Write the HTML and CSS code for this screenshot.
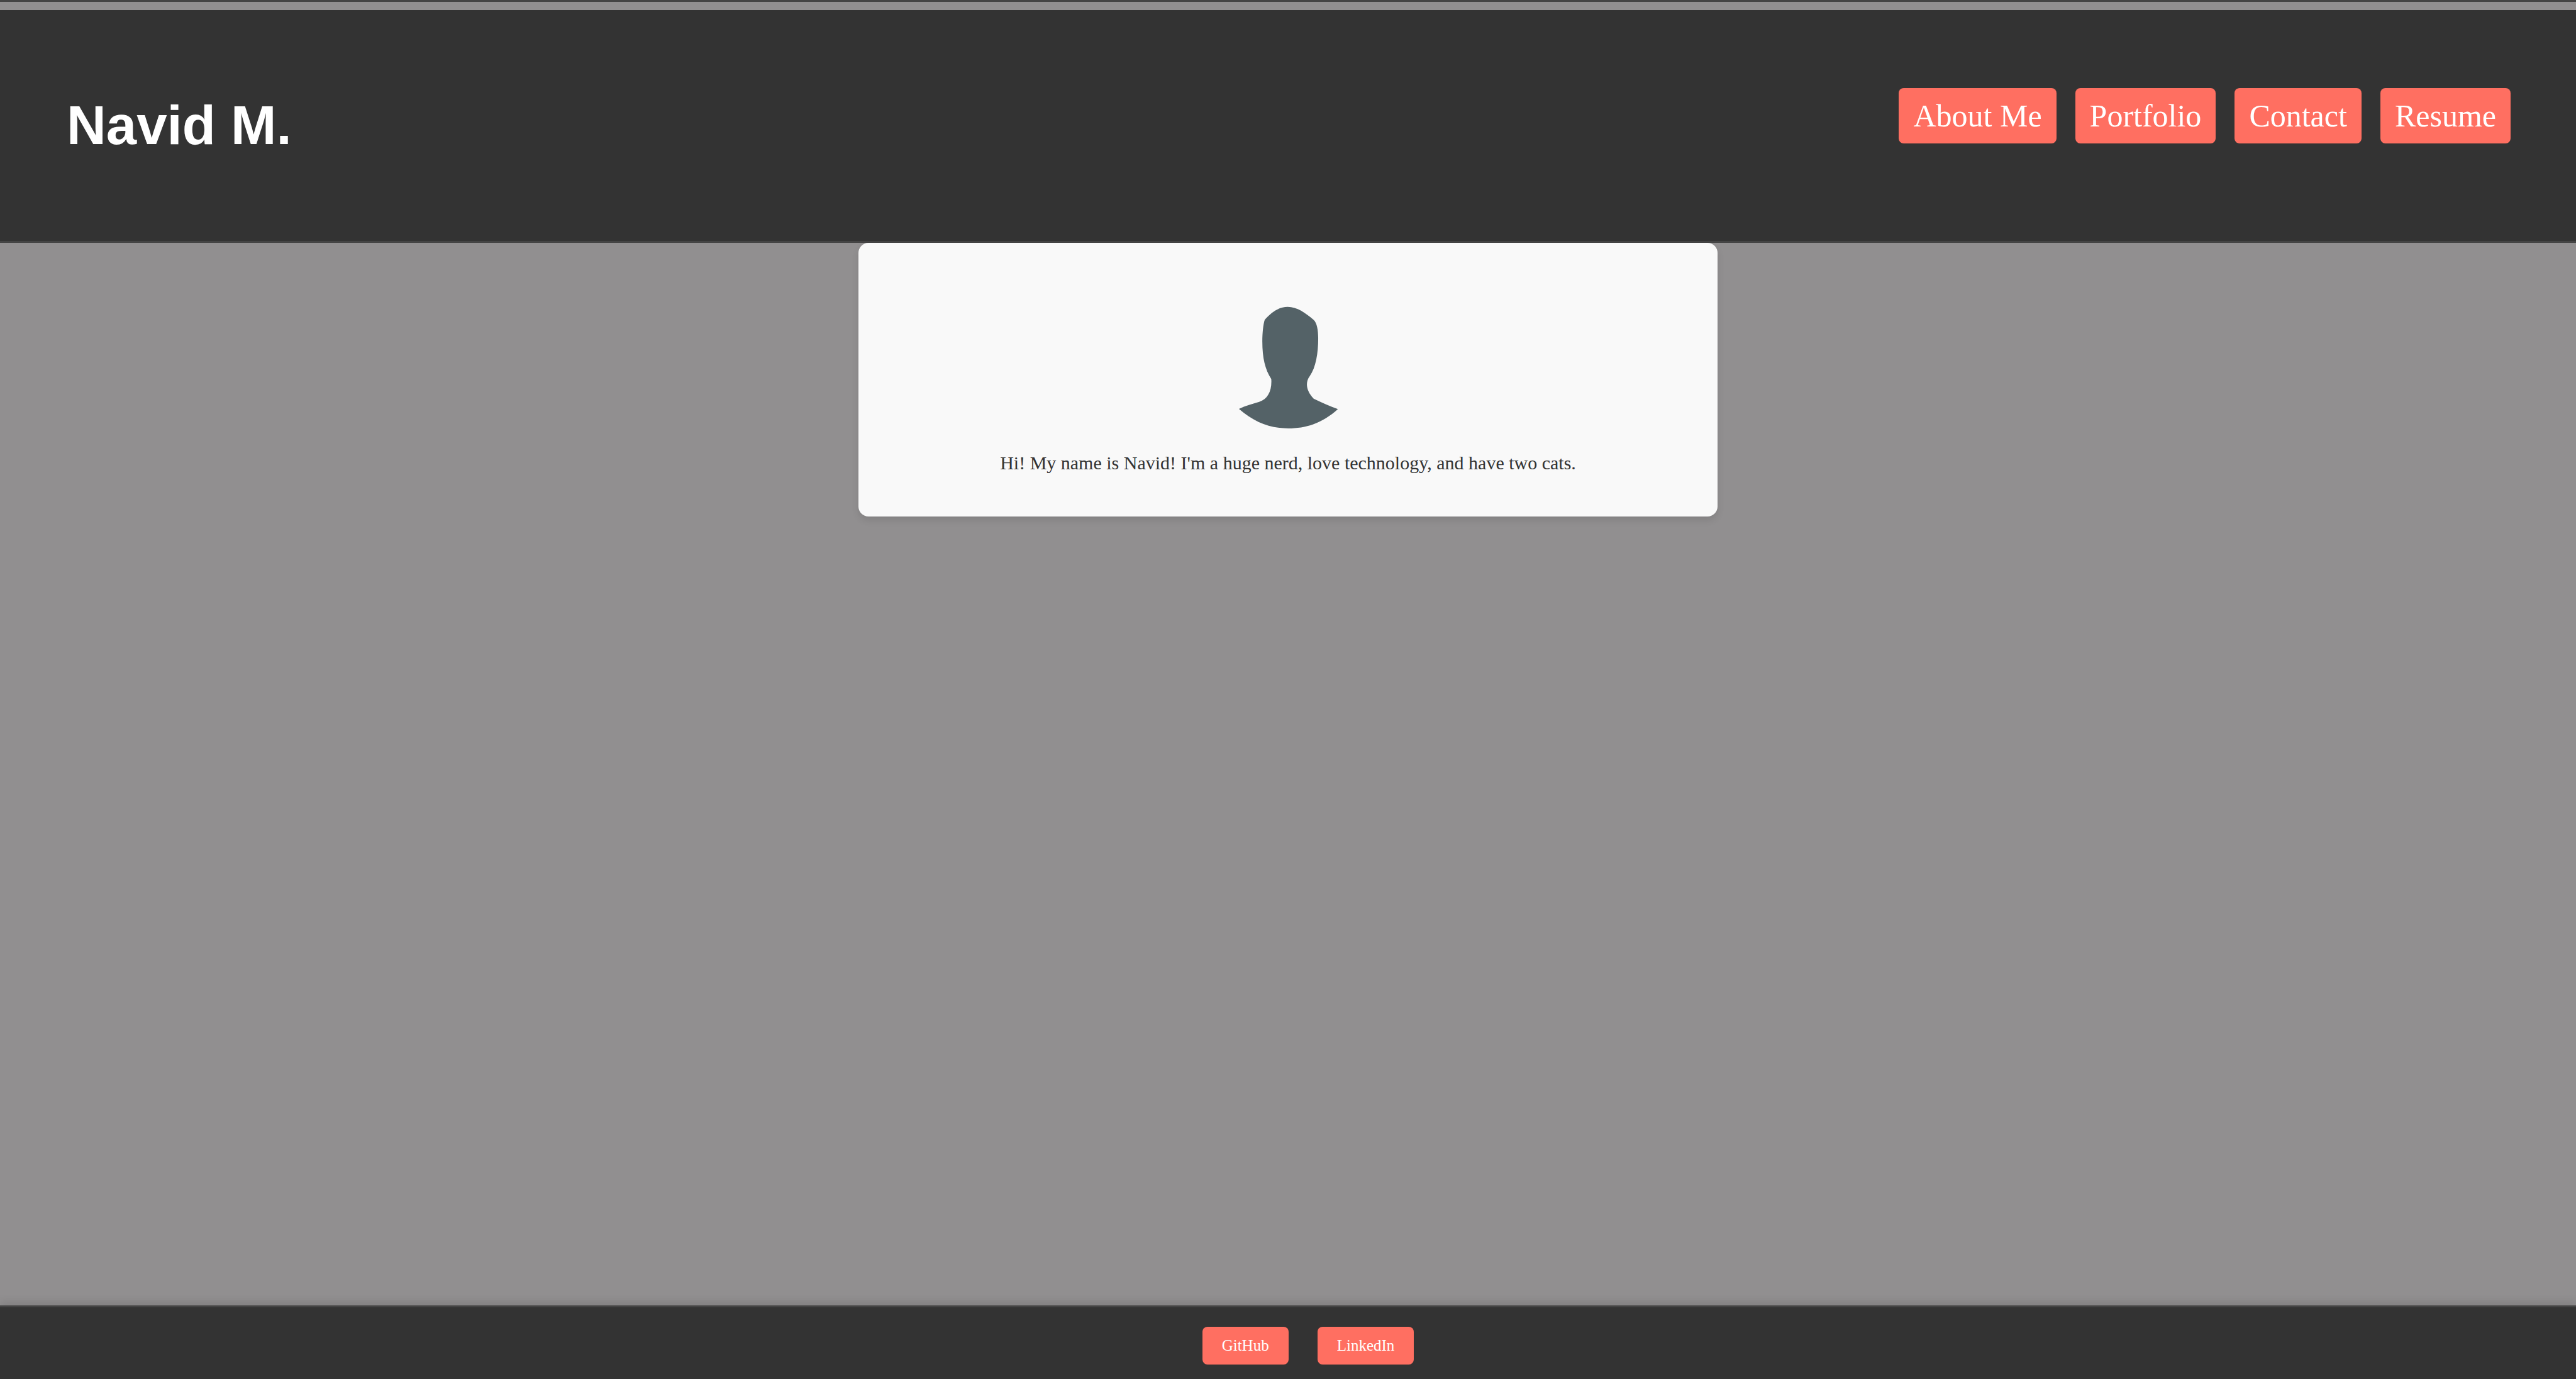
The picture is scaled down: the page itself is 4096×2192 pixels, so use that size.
FILE: index.html
```
<!DOCTYPE html>
<html lang="en">
<head>
<meta charset="utf-8">
<title>Navid M.</title>
<meta name="viewport" content="width=device-width, initial-scale=1">
<link rel="stylesheet" href="styles.css">
</head>
<body>
<header class="site-header">
  <h1 class="site-title">Navid M.</h1>
  <nav class="site-nav" aria-label="Main">
    <a class="nav-link" href="#about">About Me</a>
    <a class="nav-link" href="#portfolio">Portfolio</a>
    <a class="nav-link" href="#contact">Contact</a>
    <a class="nav-link" href="#resume">Resume</a>
  </nav>
</header>
<main class="content">
  <section class="card" id="about">
    <svg class="avatar" viewBox="0 0 960 960" role="img" aria-label="Portrait silhouette">
      <path fill="#546267" d="M337 225C380 178 424 146 478 146C535 146 586 182 638 226C658 243 666 290 666 340C666 430 652 520 613 574C587 608 589 660 638 711C688 735 734 756 787 775C690 864 588 894 482 894C370 894 274 857 178 774C218 756 260 743 303 731C358 714 382 658 377 590C339 532 322 460 322 360C322 305 328 250 337 225Z"/>
    </svg>
    <p class="intro">Hi! My name is Navid! I'm a huge nerd, love technology, and have two cats.</p>
  </section>
</main>
<footer class="site-footer">
  <a class="footer-link" href="#github">GitHub</a>
  <a class="footer-link" href="#linkedin">LinkedIn</a>
</footer>
</body>
</html>
```
FILE: styles.css
```
* {
  box-sizing: border-box;
}

body {
  margin: 0;
  min-height: 100vh;
  display: flex;
  flex-direction: column;
  border-top: 3px solid #444;
  background: #918f90;
  color: #333;
  font-family: "Liberation Serif", "Times New Roman", serif;
}

.site-header {
  display: flex;
  justify-content: space-between;
  align-items: flex-start;
  margin-top: 13px;
  padding: 124px 104px 129px 106px;
  background: #333;
  border-bottom: 3px solid #444;
}

.site-title {
  margin: 0;
  padding-top: 4px;
  color: #fff;
  font-family: "Liberation Sans", Arial, sans-serif;
  font-size: 87px;
  line-height: 110px;
}

.site-nav {
  display: flex;
  gap: 30px;
}

.nav-link {
  padding: 15px 23px;
  border-radius: 8px;
  background: #ff6f61;
  color: #fff;
  font-size: 50px;
  line-height: 58px;
  text-decoration: none;
}

.content {
  flex: 1;
}

.card {
  width: 33.333%;
  margin: 0 auto;
  padding: 64px 64px 67px;
  border-radius: 16px;
  background: #f9f9f9;
  box-shadow: 0 6px 12px rgba(0, 0, 0, 0.1);
  text-align: center;
}

.avatar {
  display: block;
  width: 248px;
  height: 248px;
  margin: 0 auto 20px;
}

.intro {
  margin: 0;
  font-size: 30px;
  line-height: 36px;
}

.site-footer {
  display: flex;
  justify-content: center;
  gap: 46px;
  padding: 31px 0 23px 64px;
  background: #333;
  border-top: 3px solid #444;
  box-shadow: 0 -6px 12px rgba(0, 0, 0, 0.1);
}

.footer-link {
  padding: 15px 31px;
  border-radius: 8px;
  background: #ff6f61;
  color: #fff;
  font-size: 25px;
  line-height: 30px;
  text-decoration: none;
}
```
